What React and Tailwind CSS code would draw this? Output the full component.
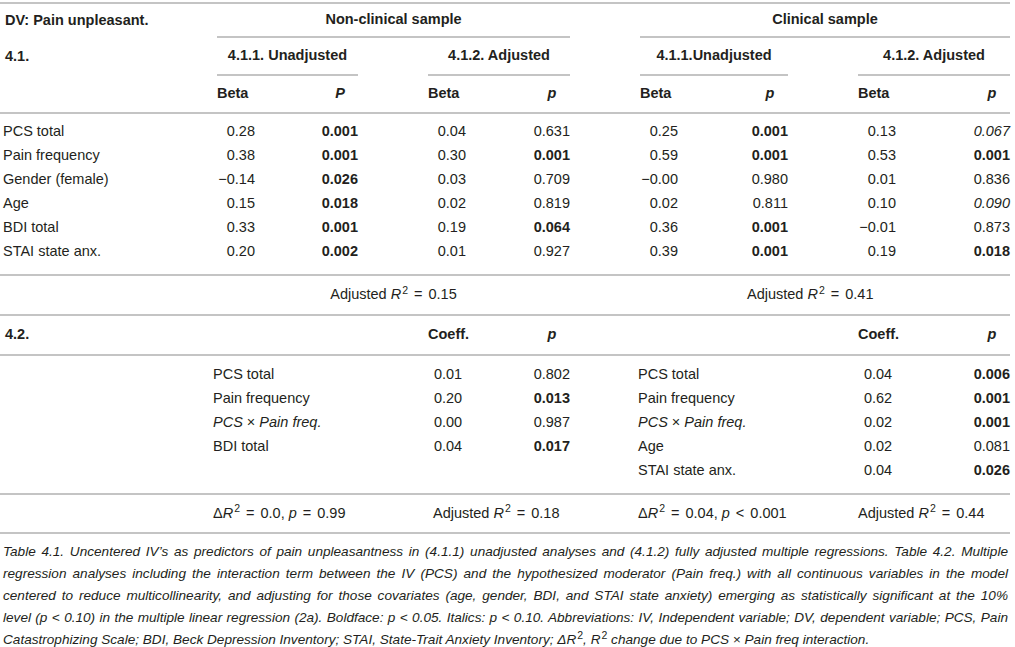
import React from "react";

const rule = "border-[#c4c4c4]";

// "*" = bold, "_" = italic
const Val = ({ v }) => {
    if (v.startsWith("*")) return <span className="font-bold">{v.slice(1)}</span>;
    if (v.startsWith("_")) return <span className="italic">{v.slice(1)}</span>;
    return <span>{v}</span>;
};

const groups = ["w-[141px]", "w-[142px]", "w-[148px]", "w-[152px]"];
const gaps = ["w-[70px]", "w-[70px]", "w-[70px]"];

const rows1 = [
    ["PCS total", "0.28", "*0.001", "0.04", "0.631", "0.25", "*0.001", "0.13", "_0.067"],
    ["Pain frequency", "0.38", "*0.001", "0.30", "*0.001", "0.59", "*0.001", "0.53", "*0.001"],
    ["Gender (female)", "−0.14", "*0.026", "0.03", "0.709", "−0.00", "0.980", "0.01", "0.836"],
    ["Age", "0.15", "*0.018", "0.02", "0.819", "0.02", "0.811", "0.10", "_0.090"],
    ["BDI total", "0.33", "*0.001", "0.19", "*0.064", "0.36", "*0.001", "−0.01", "0.873"],
    ["STAI state anx.", "0.20", "*0.002", "0.01", "0.927", "0.39", "*0.001", "0.19", "*0.018"],
];

const nonClinical = [
    ["PCS total", "0.01", "0.802"],
    ["Pain frequency", "0.20", "*0.013"],
    ["~", "0.00", "0.987"],
    ["BDI total", "0.04", "*0.017"],
    ["", "", ""],
];

const clinical = [
    ["PCS total", "0.04", "*0.006"],
    ["Pain frequency", "0.62", "*0.001"],
    ["~", "0.02", "*0.001"],
    ["Age", "0.02", "0.081"],
    ["STAI state anx.", "0.04", "*0.026"],
];

const Interaction = () => (
    <span>
        <i>PCS</i> × <i>Pain freq.</i>
    </span>
);

const R2 = () => (
    <>
        <i>R</i>
        <sup className="text-[10.5px] not-italic ml-[1px]">2</sup>
    </>
);

const Op = ({ c }) => <span className="mx-[6px]">{c}</span>;

const Group = ({ idx, children, className = "" }) => (
    <div className={`${groups[idx]} flex justify-between items-center ${className}`}>
        {children}
    </div>
);

const WithGaps = ({ render }) => (
    <>
        {[0, 1, 2, 3].map((i) => (
            <React.Fragment key={i}>
                {render(i)}
                {i < 3 && <div className={gaps[i]} />}
            </React.Fragment>
        ))}
    </>
);

const captionLines = [
    "Table 4.1. Uncentered IV’s as predictors of pain unpleasantness in (4.1.1) unadjusted analyses and (4.1.2) fully adjusted multiple regressions. Table 4.2. Multiple",
    "regression analyses including the interaction term between the IV (PCS) and the hypothesized moderator (Pain freq.) with all continuous variables in the model",
    "centered to reduce multicollinearity, and adjusting for those covariates (age, gender, BDI, and STAI state anxiety) emerging as statistically significant at the 10%",
    "level (p < 0.10) in the multiple linear regression (2a). Boldface: p < 0.05. Italics: p < 0.10. Abbreviations: IV, Independent variable; DV, dependent variable; PCS, Pain",
];

const App = () => {
    const sub = ["4.1.1. Unadjusted", "4.1.2. Adjusted", "4.1.1.Unadjusted", "4.1.2. Adjusted"];
    return (
        <div className="w-[1015px] h-[647px] overflow-hidden bg-white text-[#231f20] font-['Liberation_Sans',Arial,sans-serif] text-[14.5px]">
            <div className={`w-[1010px] mt-[2px] border-t-2 ${rule}`}>
                {/* header row 1 */}
                <div className="flex h-[34px]">
                    <div className="w-[217px] pl-[5px] flex items-center font-bold">DV: Pain unpleasant.</div>
                    <div className={`w-[353px] flex items-center justify-center font-bold border-b-2 ${rule}`}>
                        Non-clinical sample
                    </div>
                    <div className="w-[70px]" />
                    <div className={`w-[370px] flex items-center justify-center font-bold border-b-2 ${rule}`}>
                        Clinical sample
                    </div>
                </div>
                {/* header row 2 */}
                <div className="flex h-[38px]">
                    <div className="w-[217px] pl-[5px] flex items-center font-bold">4.1.</div>
                    <WithGaps
                        render={(i) => (
                            <div className={`${groups[i]} flex items-center justify-center font-bold border-b-2 ${rule}`}>
                                {sub[i]}
                            </div>
                        )}
                    />
                </div>
                {/* header row 3 */}
                <div className={`flex h-[38px] border-b-2 ${rule} font-bold`}>
                    <div className="w-[217px]" />
                    <WithGaps
                        render={(i) => (
                            <Group idx={i}>
                                <span>Beta</span>
                                <span className="w-[36px] text-center italic">{i === 0 ? "P" : "p"}</span>
                            </Group>
                        )}
                    />
                </div>
                {/* data 4.1 */}
                <div className={`pt-[6px] pb-[10px] border-b-2 ${rule}`}>
                    {rows1.map((r) => (
                        <div key={r[0]} className="flex h-[24px] items-center">
                            <div className="w-[217px] pl-[3px]">{r[0]}</div>
                            <WithGaps
                                render={(i) => (
                                    <Group idx={i}>
                                        <div className="w-[38px] flex justify-end whitespace-nowrap">
                                            <Val v={r[1 + i * 2]} />
                                        </div>
                                        <div className="flex justify-end whitespace-nowrap">
                                            <Val v={r[2 + i * 2]} />
                                        </div>
                                    </Group>
                                )}
                            />
                        </div>
                    ))}
                </div>
                {/* adjusted R2 4.1 */}
                <div className={`flex h-[40px] items-center border-b-2 ${rule}`}>
                    <div className="w-[217px]" />
                    <div className="w-[353px] text-center">
                        Adjusted <R2 />
                        <Op c="=" />
                        0.15
                    </div>
                    <div className="w-[70px]" />
                    <div className="w-[370px] pl-[107px]">
                        Adjusted <R2 />
                        <Op c="=" />
                        0.41
                    </div>
                </div>
                {/* header 4.2 */}
                <div className={`flex h-[40px] items-center border-b-2 ${rule} font-bold`}>
                    <div className="w-[213px] pl-[5px]">4.2.</div>
                    <div className="w-[215px]" />
                    <div className="w-[40px] text-center">Coeff.</div>
                    <div className="w-[102px] flex justify-end">
                        <span className="w-[36px] text-center italic">p</span>
                    </div>
                    <div className="w-[68px]" />
                    <div className="w-[220px]" />
                    <div className="w-[40px] text-center">Coeff.</div>
                    <div className="w-[112px] flex justify-end">
                        <span className="w-[36px] text-center italic">p</span>
                    </div>
                </div>
                {/* data 4.2 */}
                <div className={`pt-[7px] pb-[10px] border-b-2 ${rule}`}>
                    {clinical.map((c, k) => {
                        const n = nonClinical[k];
                        return (
                            <div key={k} className="flex h-[24px] items-center">
                                <div className="w-[213px]" />
                                <div className="w-[215px]">{n[0] === "~" ? <Interaction /> : n[0]}</div>
                                <div className="w-[40px] text-center">{n[1]}</div>
                                <div className="w-[102px] flex justify-end">{n[2] && <Val v={n[2]} />}</div>
                                <div className="w-[68px]" />
                                <div className="w-[220px]">{c[0] === "~" ? <Interaction /> : c[0]}</div>
                                <div className="w-[40px] text-center">{c[1]}</div>
                                <div className="w-[112px] flex justify-end">
                                    <Val v={c[2]} />
                                </div>
                            </div>
                        );
                    })}
                </div>
                {/* footer stats */}
                <div className={`flex h-[39px] items-center border-b-2 ${rule} whitespace-nowrap`}>
                    <div className="w-[213px]" />
                    <div className="w-[220px]">
                        Δ<R2 />
                        <Op c="=" />
                        0.0, <i>p</i>
                        <Op c="=" />
                        0.99
                    </div>
                    <div className="w-[205px]">
                        Adjusted <R2 />
                        <Op c="=" />
                        0.18
                    </div>
                    <div className="w-[220px]">
                        Δ<R2 />
                        <Op c="=" />
                        0.04, <i>p</i>
                        <Op c="<" />
                        0.001
                    </div>
                    <div>
                        Adjusted <R2 />
                        <Op c="=" />
                        0.44
                    </div>
                </div>
            </div>
            {/* caption */}
            <div className="w-[1008px] pl-[3px] pt-[7px] italic leading-[22px] text-[13.6px]">
                {captionLines.map((l, i) => (
                    <div key={i} className="text-justify [text-align-last:justify] whitespace-nowrap">
                        {l}
                    </div>
                ))}
                <div>
                    Catastrophizing Scale; BDI, Beck Depression Inventory; STAI, State-Trait Anxiety Inventory; Δ<R2 />, <R2 /> change due to PCS × Pain freq interaction.
                </div>
            </div>
        </div>
    );
};

export default App;
